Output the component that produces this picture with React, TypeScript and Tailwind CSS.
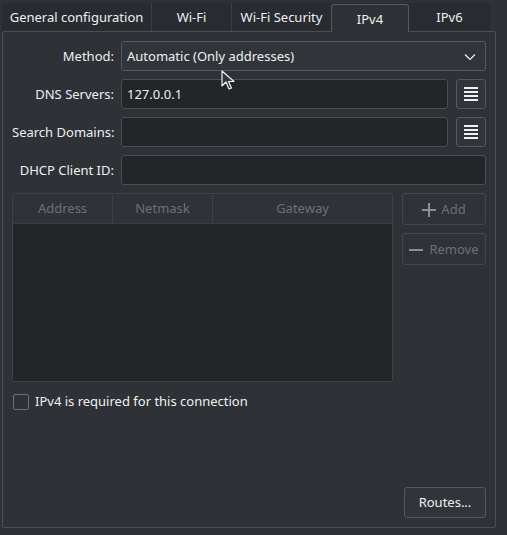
import React from "react";

const tabs = ["General configuration", "Wi-Fi", "Wi-Fi Security", "IPv4", "IPv6"];
const tabWidths = ["w-[150px]", "w-[80px]", "w-[99px]", "w-[78px]", "w-[81px]"];

function ListButton() {
  return (
    <button className="w-[30px] h-[30px] shrink-0 rounded-[3px] border border-[#55595e] bg-[#31353a] flex flex-col items-center justify-center gap-[2px]">
      <span className="block w-[14px] h-[2px] bg-[#eff0f1]" />
      <span className="block w-[14px] h-[2px] bg-[#eff0f1]" />
      <span className="block w-[14px] h-[2px] bg-[#eff0f1]" />
      <span className="block w-[14px] h-[2px] bg-[#eff0f1]" />
    </button>
  );
}

function Row({ label, children }: { label: string; children: React.ReactNode }) {
  return (
    <div className="flex items-center h-[30px] gap-[7px]">
      <div className="w-[102px] shrink-0 text-right whitespace-nowrap pt-[1px]">{label}</div>
      <div className="flex-1 flex items-center gap-[8px]">{children}</div>
    </div>
  );
}

export default function App() {
  return (
    <div
      className="relative w-[507px] h-[535px] bg-[#2e3135] text-[#eff0f1] text-[13px] overflow-hidden"
      style={{ fontFamily: '"Noto Sans", "DejaVu Sans", sans-serif' }}
    >
      {/* tab bar */}
      <div className="relative z-10 flex ml-[2px] mt-[3px] h-[28px] w-[488px] bg-[#282b2f]">
        {tabs.map((t, i) => {
          const active = t === "IPv4";
          return (
            <div
              key={t}
              className={
                tabWidths[i] +
                " flex items-center justify-center shrink-0 pt-[2px] " +
                (active
                  ? "mt-[1px] h-[28px] bg-[#2e3135] border border-b-0 border-[#55595e] rounded-t-[3px]"
                  : "h-[28px] " + (i < 2 ? "border-r border-[#3a3e43]" : ""))
              }
            >
              {t}
            </div>
          );
        })}
      </div>

      {/* panel */}
      <div className="ml-[2px] w-[494px] h-[497px] border border-[#4b4f54] rounded-[2px] px-[9px] pt-[9px] pb-[9px] flex flex-col">
        <div className="flex flex-col gap-[8px]">
          <Row label="Method:">
            <div className="flex-1 h-[30px] rounded-[3px] border border-[#55595e] bg-[#31353a] flex items-center justify-between pl-[5px] pr-[9px] pt-[1px]">
              <span>Automatic (Only addresses)</span>
              <svg width="12" height="8" viewBox="0 0 12 8" fill="none" stroke="#eff0f1" strokeWidth="1.2">
                <path d="M1 1.5 L6 6.5 L11 1.5" />
              </svg>
            </div>
          </Row>
          <Row label="DNS Servers:">
            <div className="flex-1 h-[30px] rounded-[3px] border border-[#4b4f54] bg-[#232629] flex items-center pl-[5px] pt-[1px]">
              127.0.0.1
            </div>
            <ListButton />
          </Row>
          <Row label="Search Domains:">
            <div className="flex-1 h-[30px] rounded-[3px] border border-[#4b4f54] bg-[#232629]" />
            <ListButton />
          </Row>
          <Row label="DHCP Client ID:">
            <div className="flex-1 h-[30px] rounded-[3px] border border-[#4b4f54] bg-[#232629]" />
          </Row>

          <div className="flex gap-[9px]">
            <div className="w-[381px] h-[189px] border border-[#3e4247] rounded-[2px] bg-[#232629] flex flex-col">
              <div className="h-[30px] flex bg-[#2f3337] border-b border-[#3a3e43] text-[#6c7075] pt-[1px]">
                <div className="w-[100px] flex items-center justify-center border-r border-[#3e4247]">Address</div>
                <div className="w-[100px] flex items-center justify-center border-r border-[#3e4247]">Netmask</div>
                <div className="flex-1 flex items-center justify-center">Gateway</div>
              </div>
            </div>
            <div className="flex flex-col gap-[8px]">
              <button className="w-[84px] h-[32px] rounded-[3px] border border-[#44484d] bg-[#2f3337] flex items-center justify-center gap-[5px] text-[#6c7075] pt-[1px]">
                <svg width="14" height="14" viewBox="0 0 14 14" stroke="#8b8e92" strokeWidth="2">
                  <path d="M7 0 V14 M0 7 H14" />
                </svg>
                Add
              </button>
              <button className="w-[84px] h-[32px] rounded-[3px] border border-[#44484d] bg-[#2f3337] flex items-center justify-center gap-[6px] text-[#6c7075] pt-[1px]">
                <svg width="14" height="14" viewBox="0 0 14 14" stroke="#8b8e92" strokeWidth="2">
                  <path d="M0 7 H14" />
                </svg>
                Remove
              </button>
            </div>
          </div>
        </div>

        <label className="flex items-center gap-[6px] mt-[10px] ml-[1px]">
          <span className="w-[16px] h-[16px] rounded-[2px] border border-[#6c7075] bg-[#2e3135]" />
          <span>IPv4 is required for this connection</span>
        </label>

        <div className="flex-1" />
        <div className="flex justify-end">
          <button className="w-[82px] h-[31px] rounded-[3px] border border-[#55595e] bg-[#31353a] flex items-center justify-center pt-[1px]">
            Routes...
          </button>
        </div>
      </div>

      {/* mouse pointer */}
      <svg className="absolute left-[221px] top-[70px]" width="16" height="22" viewBox="0 0 16 22">
        <path d="M1 1 L1 16 L5 12 L8 19 L10.5 18 L7.5 11.5 L13 11.5 Z" fill="#31363b" stroke="#eff0f1" strokeWidth="1.2" strokeLinejoin="round" />
      </svg>
    </div>
  );
}
